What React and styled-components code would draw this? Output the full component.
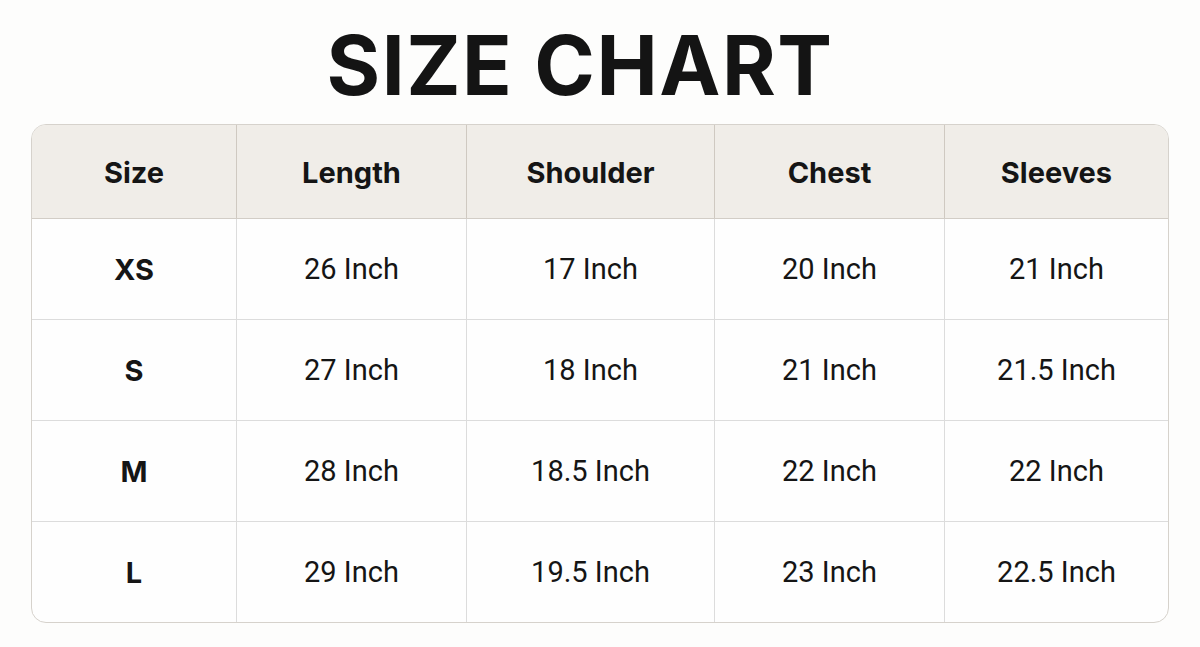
import React from 'react';
import styled, { createGlobalStyle } from 'styled-components';

const GlobalStyle = createGlobalStyle`
  html, body {
    margin: 0;
    padding: 0;
    background: #fdfdfc;
  }
  body {
    font-family: 'Inter', 'Liberation Sans', sans-serif;
    color: #111;
  }
`;

const columns = ['Size', 'Length', 'Shoulder', 'Chest', 'Sleeves'];
const colWidths = '204px 230px 248px 230px 1fr';

const rows = [
  ['XS', '26 Inch', '17 Inch', '20 Inch', '21 Inch'],
  ['S', '27 Inch', '18 Inch', '21 Inch', '21.5 Inch'],
  ['M', '28 Inch', '18.5 Inch', '22 Inch', '22 Inch'],
  ['L', '29 Inch', '19.5 Inch', '23 Inch', '22.5 Inch'],
];

const Page = styled.div`
  width: 1200px;
  height: 647px;
  box-sizing: border-box;
  padding: 24px 31px 0;
  display: flex;
  flex-direction: column;
  align-items: center;
`;

const Title = styled.h1`
  margin: 0 40px 0 0;
  height: 100px;
  font-family: 'Inter', 'Liberation Sans', sans-serif;
  font-weight: 700;
  font-size: 82px;
  line-height: 84px;
  letter-spacing: 1.5px;
  color: #141414;
`;

const Table = styled.div`
  width: 100%;
  box-sizing: border-box;
  border: 1.5px solid #d6d2cc;
  border-radius: 15px;
  overflow: hidden;
  background: #fefefe;
`;

const Row = styled.div`
  display: grid;
  box-sizing: border-box;
  grid-template-columns: ${colWidths};
  height: ${(p) => (p.$head ? '93px' : '101px')};
  background: ${(p) => (p.$head ? '#f0ede8' : 'transparent')};
  border-top: ${(p) => (p.$first ? 'none' : p.$afterHead ? '1.5px solid #d2cdc6' : '1.5px solid #dcdcdc')};
`;

const Cell = styled.div`
  display: flex;
  align-items: center;
  justify-content: center;
  border-left: ${(p) => (p.$first ? 'none' : `1.5px solid ${p.$head ? '#cfc9c1' : '#dcdcdc'}`)};
  font-family: ${(p) => (p.$bold ? "'Inter', 'Liberation Sans', sans-serif" : "'Roboto', 'Liberation Sans', sans-serif")};
  font-weight: ${(p) => (p.$bold ? 700 : 400)};
  font-size: 29px;
  color: #151515;
  padding-top: ${(p) => (p.$head ? '2px' : '0')};
`;

export default function App() {
  return (
    <>
      <GlobalStyle />
      <Page>
        <Title>SIZE CHART</Title>
        <Table>
          <Row $head $first>
            {columns.map((c, i) => (
              <Cell key={c} $head $bold $first={i === 0}>
                {c}
              </Cell>
            ))}
          </Row>
          {rows.map((r, ri) => (
            <Row key={r[0]} $afterHead={ri === 0}>
              {r.map((v, i) => (
                <Cell key={i} $first={i === 0} $bold={i === 0}>
                  {v}
                </Cell>
              ))}
            </Row>
          ))}
        </Table>
      </Page>
    </>
  );
}
